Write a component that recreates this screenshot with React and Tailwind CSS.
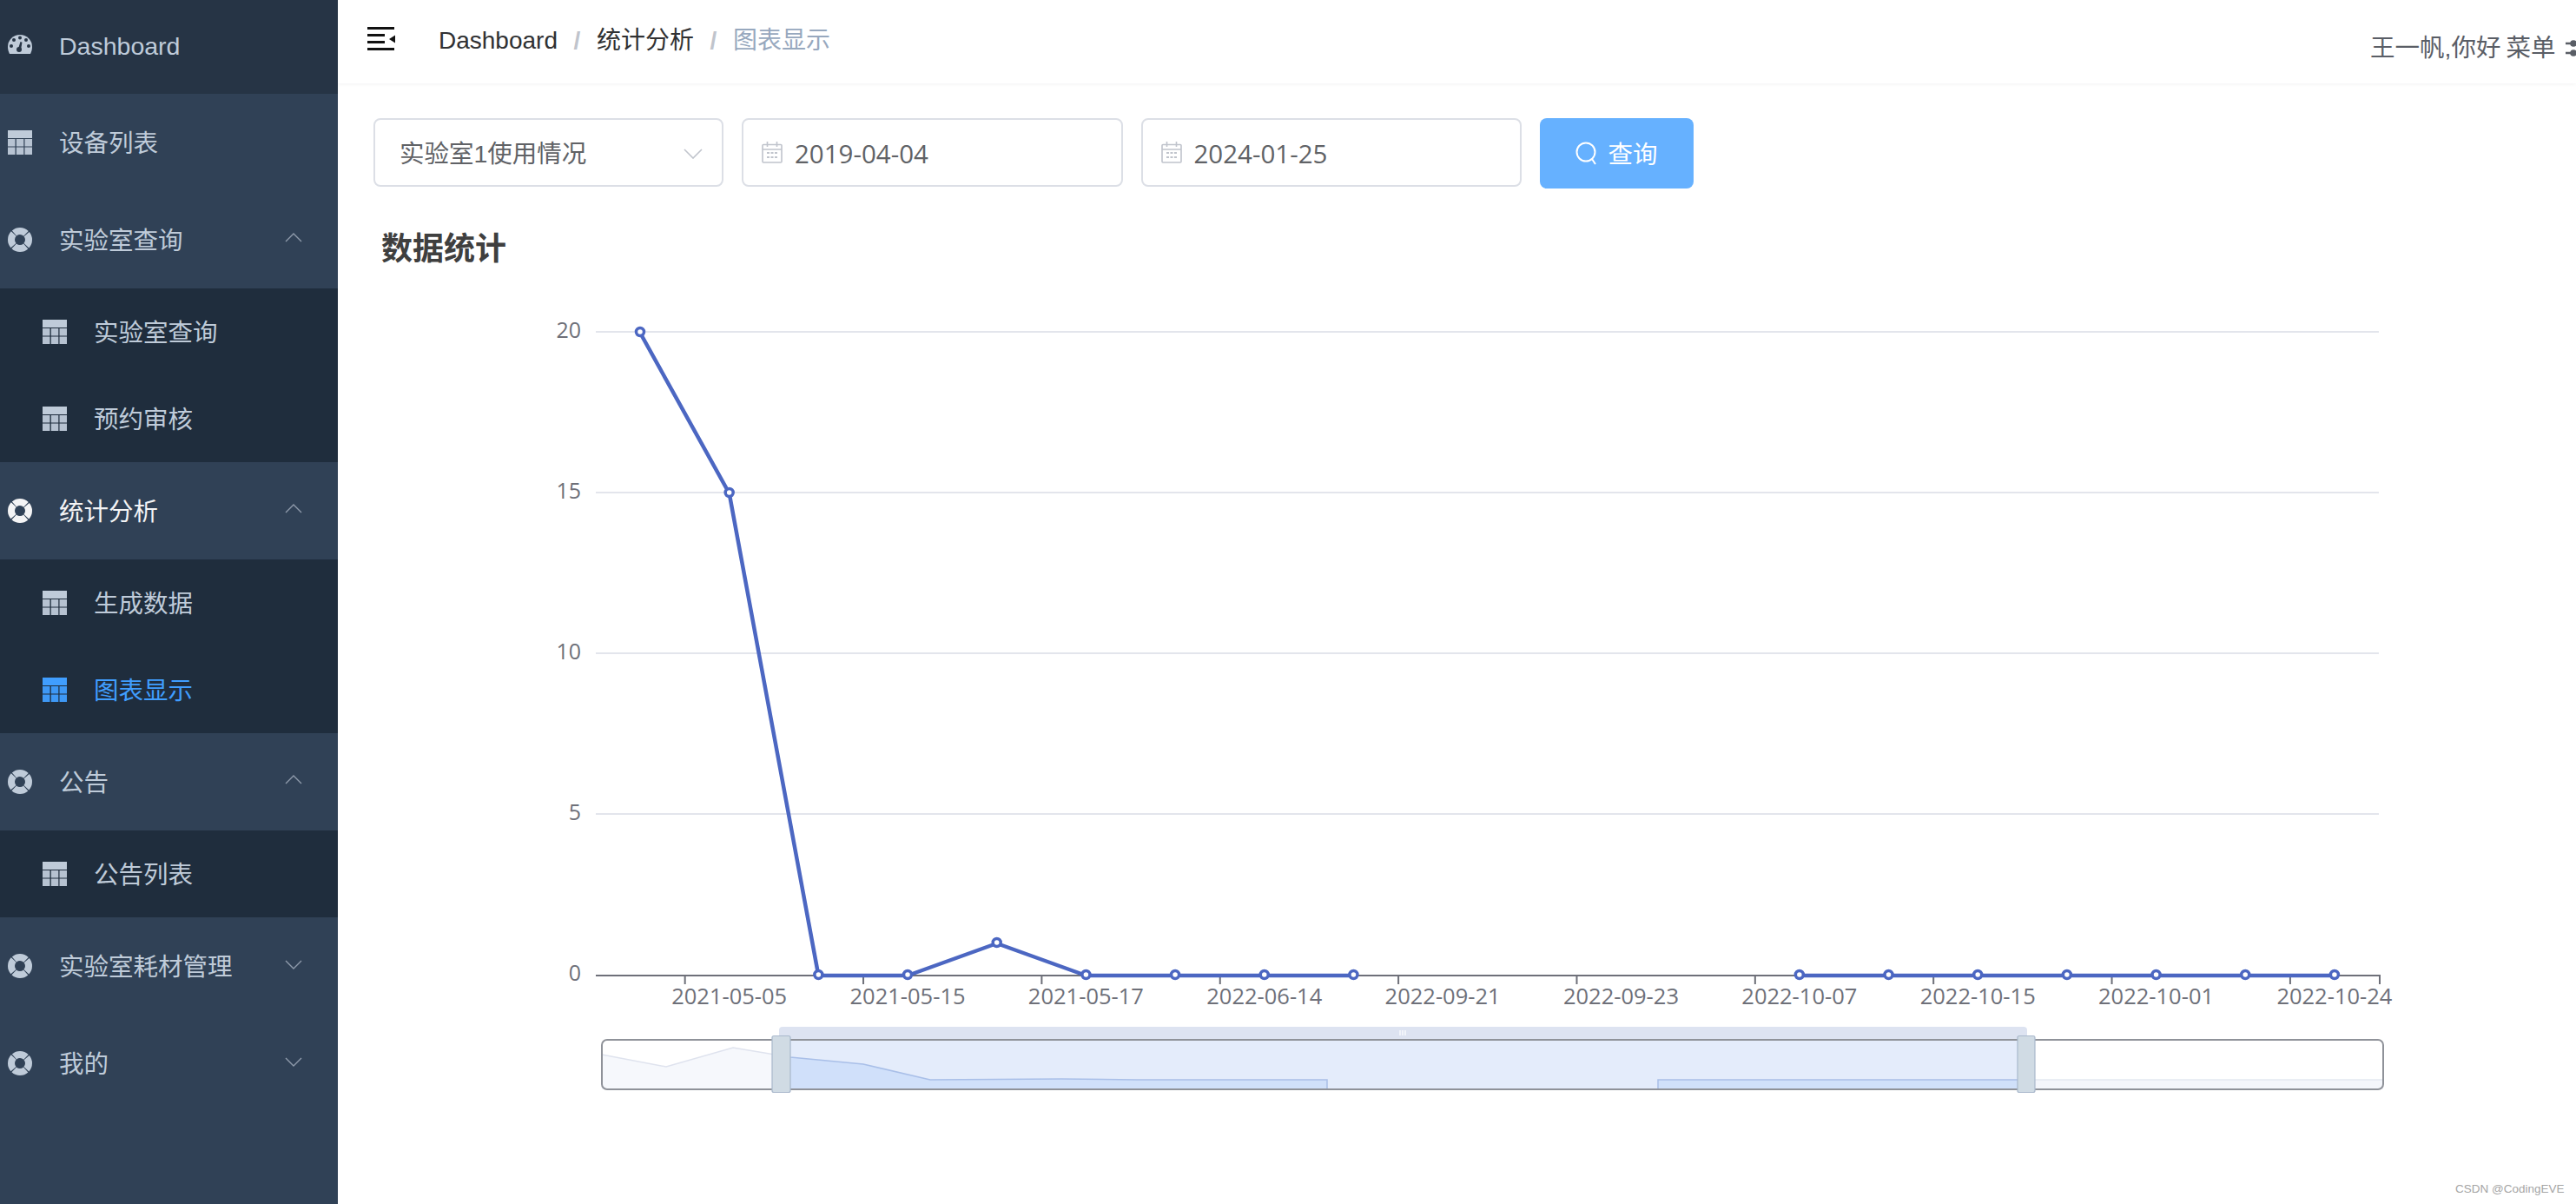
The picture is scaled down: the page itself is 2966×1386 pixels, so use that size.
const CJK = "font-['Liberation_Sans','Noto_Sans_CJK_SC',sans-serif]";

function Gauge() {
  return (
    <svg width="28" height="22" viewBox="0 0 28 22" className="shrink-0 -mt-[2px]">
      <path d="M14 0A14 14 0 0 1 28 14c0 3-1 6-2 8H2C1 20 0 17 0 14A14 14 0 0 1 14 0Z" fill="currentColor" />
      <g fill="#263445">
        <circle cx="4" cy="13" r="2" />
        <circle cx="7" cy="6" r="2" />
        <circle cx="14" cy="3.5" r="2" />
        <circle cx="21" cy="6" r="2" />
        <circle cx="24" cy="13" r="2" />
        <circle cx="13" cy="17" r="3" />
        <path d="M12 16l2.5-8 2 .8L15 17z" />
      </g>
    </svg>
  );
}

function TableIcon() {
  return (
    <svg width="28" height="28" viewBox="0 0 28 28" className="shrink-0" fill="currentColor">
      <rect x="0" y="0" width="28" height="9" />
      <g opacity="0.95">
        <rect x="0" y="10" width="8.5" height="8.5" />
        <rect x="9.8" y="10" width="8.5" height="8.5" />
        <rect x="19.5" y="10" width="8.5" height="8.5" />
        <rect x="0" y="19.5" width="8.5" height="8.5" />
        <rect x="9.8" y="19.5" width="8.5" height="8.5" />
        <rect x="19.5" y="19.5" width="8.5" height="8.5" />
      </g>
    </svg>
  );
}

function Ring() {
  return (
    <svg width="28" height="28" viewBox="0 0 28 28" className="shrink-0">
      <circle cx="14" cy="14" r="10" fill="none" stroke="currentColor" strokeWidth="8" strokeDasharray="14.7 1" strokeDashoffset="7.35" />
    </svg>
  );
}

function Chevron({ up }) {
  return (
    <svg width="20" height="12" viewBox="0 0 20 12" className="absolute left-[328px]" style={{ top: up ? 47 : 49 }}>
      <path d={up ? "M1 11L10 2l9 9" : "M1 1l9 9 9-9"} fill="none" stroke="#8f9bab" strokeWidth="1.4" />
    </svg>
  );
}

function Parent({ icon, label, chevron, active, bg = "bg-[#304156]", h = "h-[112px]" }) {
  return (
    <div className={`relative flex items-center pl-[9px] ${h} ${bg} ${active ? "text-[#f4f4f5]" : "text-[#bfcbd9]"}`}>
      {icon === "gauge" ? <Gauge /> : icon === "table" ? <TableIcon /> : <Ring />}
      <span className="ml-[31px] text-[28.5px] leading-none pt-[3px]">{label}</span>
      {chevron ? <Chevron up={chevron === "up"} /> : null}
    </div>
  );
}

function Sub({ label, active }) {
  return (
    <div className={`flex items-center h-[100px] pl-[49px] bg-[#1f2d3d] ${active ? "text-[#409eff]" : "text-[#bfcbd9]"}`}>
      <TableIcon />
      <span className="ml-[31px] text-[28.5px] leading-none pt-[3px]">{label}</span>
    </div>
  );
}

function Sidebar() {
  return (
    <aside className="w-[389px] shrink-0 bg-[#304156] min-h-full">
      <Parent icon="gauge" label="Dashboard" bg="bg-[#263445] pb-[4px]" h="h-[108px]" />
      <Parent icon="table" label="设备列表" />
      <Parent label="实验室查询" chevron="up" />
      <Sub label="实验室查询" />
      <Sub label="预约审核" />
      <Parent label="统计分析" chevron="up" active />
      <Sub label="生成数据" />
      <Sub label="图表显示" active />
      <Parent label="公告" chevron="up" />
      <Sub label="公告列表" />
      <Parent label="实验室耗材管理" chevron="down" />
      <Parent label="我的" chevron="down" />
    </aside>
  );
}

function Header() {
  return (
    <header className="h-[96px] shrink-0 flex bg-white shadow-[0_1px_4px_rgba(0,21,41,0.06)] relative">
      <svg width="32" height="27" viewBox="0 0 32 27" className="ml-[34px] mt-[31px] shrink-0" fill="#111">
        <rect width="31" height="3" />
        <rect y="8" width="20" height="3" />
        <rect y="16" width="20" height="3" />
        <rect y="24" width="31" height="3" />
        <path d="M32 9.5v9l-7-4.5z" />
      </svg>
      <nav className="ml-[50px] mt-[30px] flex items-center h-[34px] text-[28px] leading-none">
        <span className="text-[#303133]">Dashboard</span>
        <span className="w-[45px] text-center text-[#c0c4cc] font-bold">/</span>
        <span className="text-[#303133]">统计分析</span>
        <span className="w-[45px] text-center text-[#c0c4cc] font-bold">/</span>
        <span className="text-[#97a8be]">图表显示</span>
      </nav>
      <div className="ml-auto w-[237px] shrink-0 overflow-hidden whitespace-nowrap pt-[38px] text-[28.5px] leading-[34px] text-[#5a5e66] flex items-start">
        <span>王一帆,你好</span>
        <span className="ml-[6px]">菜单</span>
        <svg width="28" height="28" viewBox="0 0 28 28" className="ml-[12px] mt-[4px] shrink-0" stroke="#5a5e66" strokeWidth="2.4" fill="#5a5e66">
          <path d="M0 8h26M0 19h26" />
          <circle cx="9" cy="8" r="2.6" />
          <circle cx="9" cy="19" r="2.6" />
        </svg>
      </div>
    </header>
  );
}

function Calendar() {
  return (
    <svg width="24" height="25" viewBox="0 0 24 25" className="shrink-0" fill="none" stroke="#c0c4cc" strokeWidth="1.6">
      <rect x="1" y="3.5" width="22" height="20.5" rx="1" />
      <path d="M1 9h22M6.5 0v6M17.5 0v6" />
      <path d="M6 13h3M10.5 13h3M15 13h3M6 18h3M10.5 18h3M15 18h3" strokeWidth="2" />
    </svg>
  );
}

function DateBox({ value }) {
  return (
    <div className="w-[438.5px] h-[79px] shrink-0 flex items-center pl-[21px] border-2 border-[#dcdfe6] rounded-[8px] bg-white">
      <Calendar />
      <span className="ml-[14px] pt-[3px] text-[#606266] text-[29.5px] leading-none font-['Open_Sans',sans-serif]">{value}</span>
    </div>
  );
}

function Filters() {
  return (
    <div className="mt-[40px] ml-[41px] flex items-start gap-[21px]">
      <div className="relative w-[403px] h-[79px] shrink-0 flex items-center pl-[28px] border-2 border-[#dcdfe6] rounded-[8px] bg-white">
        <span className="text-[28.5px] leading-none pt-[3px] text-[#606266]">实验室1使用情况</span>
        <svg width="22" height="12" viewBox="0 0 22 12" className="absolute right-[22px] top-[33px]">
          <path d="M1 1l10 10L21 1" fill="none" stroke="#c0c4cc" strokeWidth="1.6" />
        </svg>
      </div>
      <DateBox value="2019-04-04" />
      <DateBox value="2024-01-25" />
      <button className="w-[177px] h-[81px] shrink-0 flex items-center justify-center bg-[#66b1ff] rounded-[8px] text-white text-[28.5px]">
        <svg width="25" height="27" viewBox="0 0 25 27" fill="none" stroke="white" strokeWidth="2">
          <circle cx="12" cy="12" r="10.5" />
          <path d="M19 20l4 6" />
        </svg>
        <span className="ml-[12px] leading-none pt-[3px]">查询</span>
      </button>
    </div>
  );
}

const BLUE = "#4c67c2";
const Y0 = 1123;
const X0 = 737;
const STEP = 102.68;
const values = [20, 15, 0, 0, 1, 0, 0, 0, 0, null, null, null, null, 0, 0, 0, 0, 0, 0, 0];
const xOf = (i) => X0 + STEP * i;
const yOf = (v) => Y0 - v * 37;
const labels = ["2021-05-05", "2021-05-15", "2021-05-17", "2022-06-14", "2022-09-21", "2022-09-23", "2022-10-07", "2022-10-15", "2022-10-01", "2022-10-24"];

function Chart() {
  const first = values.slice(0, 9).map((v, i) => `${xOf(i)},${yOf(v)}`).join(" ");
  const second = values.map((v, i) => (v === null || i < 13 ? null : `${xOf(i)},${yOf(v)}`)).filter(Boolean).join(" ");
  return (
    <svg width="2577" height="1000" viewBox="389 340 2577 1000" className="mt-[28px] block shrink-0">
      {[20, 15, 10, 5].map((v) => (
        <line key={v} x1="686" x2="2739" y1={yOf(v) - 1} y2={yOf(v) - 1} stroke="#e3e5ec" strokeWidth="2" />
      ))}
      {[20, 15, 10, 5, 0].map((v) => (
        <text key={v} x="669" y={yOf(v) + 6} textAnchor="end" fontFamily="Open Sans, sans-serif" fontSize="25" fill="#6e7079">{v}</text>
      ))}
      <line x1="686" x2="2741" y1="1123" y2="1123" stroke="#6e7079" strokeWidth="2" />
      {Array.from({ length: 11 }).map((_, k) => {
        const x = k === 10 ? 2740 : 686 + 102.68 + 205.36 * k;
        return <line key={k} x1={x} x2={x} y1="1123" y2="1133" stroke="#6e7079" strokeWidth="2" />;
      })}
      {labels.map((t, k) => (
        <text key={t + k} x={xOf(1 + 2 * k)} y="1156" textAnchor="middle" fontFamily="Open Sans, sans-serif" fontSize="25.5" fill="#6e7079">{t}</text>
      ))}
      <polyline points={first} fill="none" stroke={BLUE} strokeWidth="4.5" strokeLinejoin="round" />
      <polyline points={second} fill="none" stroke={BLUE} strokeWidth="4.5" strokeLinejoin="round" />
      {values.map((v, i) => (v === null ? null : <circle key={i} cx={xOf(i)} cy={yOf(v) - 1} r="4.5" fill="white" stroke={BLUE} strokeWidth="3.5" />))}

      {/* data zoom */}
      <rect x="693" y="1197" width="2051" height="57" rx="6" fill="white" />
      <path d="M693 1214L767 1228 844 1206 910 1217 994 1225 1071 1243 1222 1242 1309 1243 1528 1243V1254H693Z" fill="#f6f8fc" />
      <path d="M693 1214L767 1228 844 1206 910 1217" fill="none" stroke="#dfe3ee" strokeWidth="1.5" />
      <path d="M1909 1254V1243H2744V1254Z" fill="#f4f6fb" />
      <path d="M2330 1243H2744" stroke="#e4e8f0" strokeWidth="1.5" />
      <rect x="897" y="1197" width="1437" height="57" fill="#e4ecfb" />
      <path d="M897 1215L910 1217 994 1225 1071 1243 1222 1242 1309 1243 1528 1243V1254H897Z" fill="#d0e0fa" />
      <path d="M897 1215L910 1217 994 1225 1071 1243 1222 1242 1309 1243 1528 1243V1254" fill="none" stroke="#a9bfe8" strokeWidth="1.5" />
      <path d="M1909 1254V1243H2334V1254Z" fill="#d0e0fa" />
      <path d="M1909 1254V1243H2334" fill="none" stroke="#a9bfe8" strokeWidth="1.5" />
      <rect x="693" y="1197" width="2051" height="57" rx="6" fill="none" stroke="#8f9299" strokeWidth="2" />
      <path d="M897 1196V1186a4 4 0 0 1 4-4H2330a4 4 0 0 1 4 4V1196Z" fill="#dde3f1" />
      <path d="M1612 1186v6M1615 1186v6M1618 1186v6" stroke="white" strokeWidth="1.2" />
      <rect x="889" y="1192.5" width="21" height="65" rx="2" fill="#d0dbe4" stroke="#a9b8cc" strokeWidth="1.2" />
      <rect x="2323" y="1192.5" width="20" height="65" rx="2" fill="#d0dbe4" stroke="#a9b8cc" strokeWidth="1.2" />
    </svg>
  );
}

export default function App() {
  return (
    <div className={`relative flex h-screen overflow-hidden bg-white ${CJK}`}>
      <Sidebar />
      <main className="flex-1 min-w-0 flex flex-col overflow-hidden">
        <Header />
        <Filters />
        <h2 className="mt-[45px] ml-[50px] text-[36px] leading-[50px] font-bold text-[#3f3f3f]">数据统计</h2>
        <Chart />
      </main>
      <div className="absolute left-[2827px] top-[1361px] text-[13.5px] leading-4 text-[#a5a5a5]">CSDN @CodingEVE</div>
    </div>
  );
}
